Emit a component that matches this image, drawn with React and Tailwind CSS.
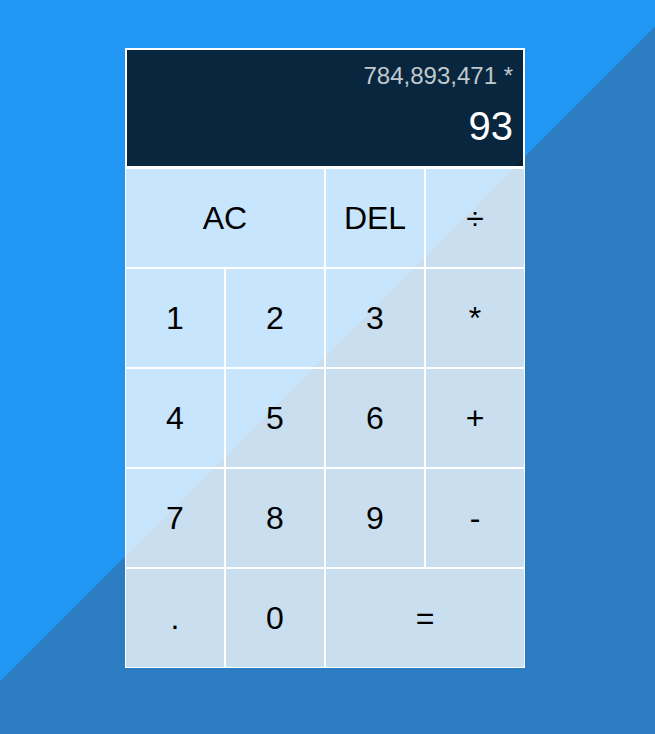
import React from "react";

const btn = "border border-white bg-[rgba(255,255,255,0.75)] text-[32px] text-black cursor-pointer outline-none";

export default function App() {
  const font = { fontFamily: '"Liberation Sans", Arial, sans-serif' };
  return (
    <div
      className="min-h-screen w-full bg-[linear-gradient(135deg,#2196f3_49.1%,#2b7cc0_49.1%)] pt-[48px] pl-[125px]"
      style={font}
    >
      <div className="grid justify-start grid-cols-[repeat(4,100px)] grid-rows-[minmax(120px,auto)_repeat(5,100px)]">
        <div className="col-span-4 flex flex-col items-end justify-around border-2 border-white bg-[rgba(0,0,0,0.75)] pt-[7px] pb-[9px] px-[10px] break-all">
          <div className="text-[24px] text-[rgba(255,255,255,0.75)]">784,893,471 *</div>
          <div className="text-[40px] text-white">93</div>
        </div>
        <button className={`${btn} col-span-2`}>AC</button>
        <button className={btn}>DEL</button>
        <button className={btn}>÷</button>
        <button className={btn}>1</button>
        <button className={btn}>2</button>
        <button className={btn}>3</button>
        <button className={btn}>*</button>
        <button className={btn}>4</button>
        <button className={btn}>5</button>
        <button className={btn}>6</button>
        <button className={btn}>+</button>
        <button className={btn}>7</button>
        <button className={btn}>8</button>
        <button className={btn}>9</button>
        <button className={btn}>-</button>
        <button className={btn}>.</button>
        <button className={btn}>0</button>
        <button className={`${btn} col-span-2`}>=</button>
      </div>
    </div>
  );
}
